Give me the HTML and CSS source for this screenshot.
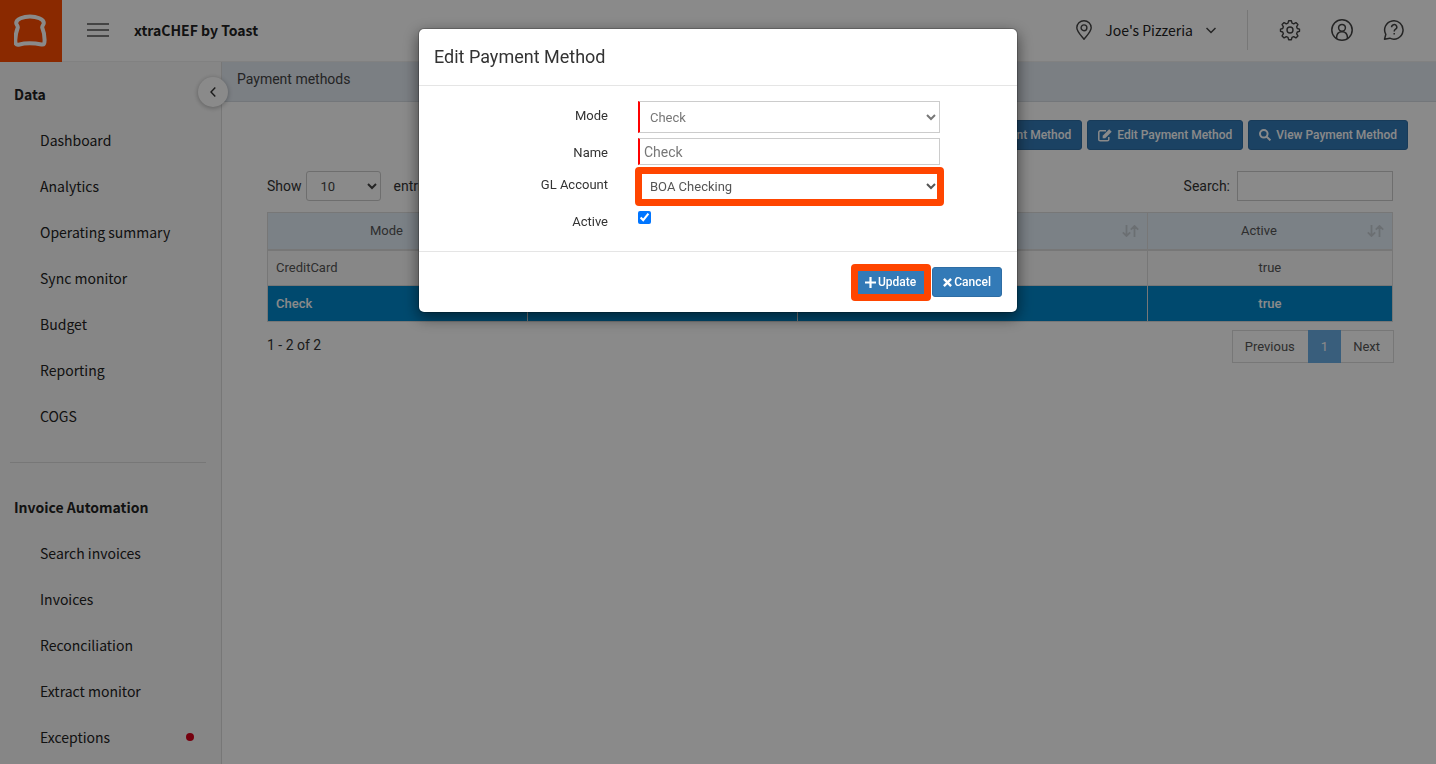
FILE: index.html
```html
<!DOCTYPE html>
<html lang="en">
<head>
    <meta charset="UTF-8">
    <meta name="viewport" content="width=device-width, initial-scale=1.0">
    <title>Payment methods</title>
    <link rel="stylesheet" href="styles.css">
</head>
<body>
    <header class="topbar">
        <a href="#" class="logo" aria-label="Toast">
            <svg width="34" height="34" viewBox="0 0 34 34" fill="none" stroke="#fff" stroke-width="4" stroke-linejoin="round">
                <path d="M16 2.500C9.500 2.500 2.200 5 2.200 9C2.200 11 4 11.300 3.800 13.500C2.500 17 1.300 21 1.300 26C1.300 30 2 31 4.500 30.700C8 29.800 12 29.300 15.800 29.300C20 29.300 24 29.800 27.500 30.500C30 31 30.600 30 30.600 26C30.600 21 29.600 17 28.200 13.500C28 11.300 29.800 11 29.800 9C29.800 5 22.500 2.500 16 2.500Z"/>
            </svg>
        </a>
        <button class="icon-btn menu-btn" aria-label="Menu">
            <svg width="22" height="14" viewBox="0 0 22 14" stroke="#555" stroke-width="1.500"><path d="M0 1h22M0 7h22M0 13h22"/></svg>
        </button>
        <span class="brand">xtraCHEF by Toast</span>
        <button class="icon-btn location">
            <svg width="16" height="20" viewBox="0 0 16 20" fill="none" stroke="#444" stroke-width="1.400"><path d="M8 19.200C5 15.500 .8 11.500 .8 7.800a7.200 7 0 0 1 14.400 0C15.200 11.500 11 15.500 8 19.200Z"/><circle cx="8" cy="7.800" r="2.900"/></svg>
            <span>Joe's Pizzeria</span>
            <svg width="10" height="7" viewBox="0 0 10 7" fill="none" stroke="#444" stroke-width="1.500"><path d="M.5 1L5 5.500L9.500 1"/></svg>
        </button>
        <div class="top-icons">
            <button class="icon-btn" aria-label="Settings">
                <svg width="22" height="22" viewBox="0 0 22 22" fill="none" stroke="#444" stroke-width="1.400" stroke-linejoin="round"><circle cx="11" cy="11" r="3"/><path d="M9.600 1.800h2.800l.6 2.400 1.700.7 2.200-1.300 2 2-1.300 2.200.7 1.700 2.200.6v2.200l-2.200.7-.7 1.700 1.300 2.200-2 2-2.200-1.300-1.700.7-.6 2.400H9.600L9 18.300l-1.700-.7-2.200 1.300-2-2 1.300-2.200-.7-1.700-2.200-.7v-2.200l2.200-.6.7-1.700-1.300-2.200 2-2 2.200 1.300L9 4.200Z"/></svg>
            </button>
            <button class="icon-btn" aria-label="Account">
                <svg width="22" height="22" viewBox="0 0 22 22" fill="none" stroke="#444" stroke-width="1.500"><circle cx="11" cy="11" r="10.200"/><circle cx="11" cy="8.800" r="3.400"/><path d="M5.500 19.300C5.500 15 7.500 12.800 11 12.800S16.500 15 16.500 19.300"/></svg>
            </button>
            <button class="icon-btn" aria-label="Help">
                <svg width="22" height="22" viewBox="0 0 22 22" fill="none" stroke="#444" stroke-width="1.500" stroke-linejoin="round"><path d="M1.500 20.200L2.800 15.400A9.200 9.200 0 1 1 6.800 19.200Z"/><path d="M8.600 8.300A2.600 2.500 0 1 1 12.600 10.200C11.500 10.900 11.200 11.400 11.200 12.500"/><path d="M11.200 13.900v1.500"/></svg>
            </button>
        </div>
    </header>

    <div class="layout">
        <aside class="sidebar">
            <button class="collapse" aria-label="Collapse">
                <svg width="6" height="10" viewBox="0 0 6 10" fill="none" stroke="#333" stroke-width="1.400"><path d="M5.300 .5L1 5l4.300 4.500"/></svg>
            </button>
            <nav>
                <h2>Data</h2>
                <a href="#">Dashboard</a>
                <a href="#">Analytics</a>
                <a href="#">Operating summary</a>
                <a href="#">Sync monitor</a>
                <a href="#">Budget</a>
                <a href="#">Reporting</a>
                <a href="#">COGS</a>
                <hr>
                <h2>Invoice Automation</h2>
                <a href="#">Search invoices</a>
                <a href="#">Invoices</a>
                <a href="#">Reconciliation</a>
                <a href="#">Extract monitor</a>
                <a href="#">Exceptions <span class="dot"></span></a>
            </nav>
        </aside>

        <main class="content">
            <div class="page-title">Payment methods</div>
            <div class="actions">
                <button class="btn"><svg width="12" height="12" viewBox="0 0 12 12" stroke="#fff" stroke-width="2.500"><path d="M6 0v12M0 6h12"/></svg>Add Payment Method</button>
                <button class="btn"><svg width="14" height="13" viewBox="0 0 14 13" fill="none" stroke="#fff" stroke-width="1.500"><path d="M8 1.800H2.200a1.400 1.400 0 0 0-1.400 1.400v7.200a1.400 1.400 0 0 0 1.400 1.400h7.200a1.400 1.400 0 0 0 1.400-1.400V8"/><path d="M4.700 9.300V6.800L11.200 .3l2.500 2.500-6.500 6.500Z" fill="#fff" stroke="none"/></svg>Edit Payment Method</button>
                <button class="btn"><svg width="12" height="12" viewBox="0 0 12 12" fill="none" stroke="#fff" stroke-width="2"><circle cx="4.800" cy="4.800" r="3.800"/><path d="M7.600 7.600L11.400 11.400"/></svg>View Payment Method</button>
            </div>

            <div class="grid">
                <div class="grid-top">
                    <label>Show
                        <select class="length">
                            <option>10</option>
                            <option>25</option>
                        </select>
                        <span class="entries">entries</span>
                    </label>
                    <label>Search: <input type="search" class="search"></label>
                </div>
                <table>
                    <colgroup><col class="c1"><col class="c2"><col class="c3"><col class="c4"></colgroup>
                    <thead>
                        <tr>
                            <th>Mode</th>
                            <th>Name</th>
                            <th>GL Account
                                <svg class="sort" width="17" height="12" viewBox="0 0 17 12" fill="none" stroke="#c6cdd3" stroke-width="1.800"><path d="M4.500 0v11M.8 7.300l3.700 3.700 3.700-3.700M12.500 12V1M8.800 4.700L12.500 1l3.700 3.700"/></svg>
                            </th>
                            <th>Active
                                <svg class="sort" width="17" height="12" viewBox="0 0 17 12" fill="none" stroke="#c6cdd3" stroke-width="1.800"><path d="M4.500 0v11M.8 7.300l3.700 3.700 3.700-3.700M12.500 12V1M8.800 4.700L12.500 1l3.700 3.700"/></svg>
                            </th>
                        </tr>
                    </thead>
                    <tbody>
                        <tr>
                            <td>CreditCard</td>
                            <td></td>
                            <td></td>
                            <td class="center">true</td>
                        </tr>
                        <tr class="selected">
                            <td>Check</td>
                            <td></td>
                            <td></td>
                            <td class="center">true</td>
                        </tr>
                    </tbody>
                </table>
                <div class="grid-bottom">
                    <span>1 - 2 of 2</span>
                    <div class="pager">
                        <a href="#">Previous</a>
                        <a href="#" class="current">1</a>
                        <a href="#">Next</a>
                    </div>
                </div>
            </div>
        </main>
    </div>

    <div class="backdrop">
        <form class="modal" role="dialog" aria-labelledby="modal-title">
            <h4 class="modal-header" id="modal-title">Edit Payment Method</h4>
            <div class="modal-body">
                <div class="row">
                    <label for="mode">Mode</label>
                    <select id="mode" class="field required" disabled>
                        <option>Check</option>
                    </select>
                </div>
                <div class="row">
                    <label for="name">Name</label>
                    <input type="text" id="name" class="field required" value="Check">
                </div>
                <div class="row">
                    <label for="gl">GL Account</label>
                    <div class="highlight">
                        <select id="gl" class="field">
                            <option>BOA Checking</option>
                        </select>
                    </div>
                </div>
                <div class="row">
                    <label for="active">Active</label>
                    <input type="checkbox" id="active" checked>
                </div>
            </div>
            <div class="modal-footer">
                <div class="highlight">
                    <button type="button" class="btn small"><svg width="11" height="11" viewBox="0 0 11 11" stroke="#fff" stroke-width="2.200"><path d="M5.500 0v11M0 5.500h11"/></svg>Update</button>
                </div>
                <button type="button" class="btn small"><svg width="9" height="9" viewBox="0 0 9 9" stroke="#fff" stroke-width="2.400"><path d="M.9 .9l7.200 7.200M8.100 .9L.9 8.100"/></svg>Cancel</button>
            </div>
        </form>
    </div>
</body>
</html>
```
FILE: styles.css
```css
* {
    box-sizing: border-box;
}
body {
    margin: 0;
    height: 100vh;
    overflow: hidden;
    display: flex;
    flex-direction: column;
    font-family: Roboto, sans-serif;
    font-size: 14px;
    line-height: 20px;
    color: #333;
    background-color: #fff;
}
button, input, select {
    font: inherit;
    color: inherit;
}
a {
    color: inherit;
    text-decoration: none;
}

/* top bar */
.topbar {
    display: flex;
    align-items: center;
    flex: none;
    height: 62px;
    padding: 0 31px 1px 0;
    border-bottom: 1px solid #eee;
    font-family: "Noto Sans CJK SC", sans-serif;
    color: #222;
}
.logo {
    display: flex;
    align-items: center;
    align-self: flex-start;
    justify-content: center;
    width: 62px;
    height: 62px;
    background-color: #ff4c00;
}
.icon-btn {
    display: flex;
    align-items: center;
    padding: 0;
    border: 0;
    background: none;
}
.menu-btn {
    margin: 0 25px;
}
.brand {
    font-weight: bold;
}
.location {
    gap: 13px;
    margin-left: auto;
    padding-right: 31px;
}
.top-icons {
    display: flex;
    align-items: center;
    gap: 30px;
    height: 40px;
    padding-left: 31px;
    border-left: 1px solid #ddd;
}

/* sidebar */
.layout {
    display: flex;
    flex: 1;
    min-height: 0;
}
.sidebar {
    position: relative;
    flex: none;
    width: 222px;
    padding: 10px 15px 0 10px;
    background-color: #f8f8f8;
    border-right: 1px solid #ddd;
    font-family: "Noto Sans CJK SC", sans-serif;
    color: #222;
}
.sidebar h2, .sidebar a {
    display: flex;
    align-items: center;
    height: 46px;
    margin: 0;
    padding-bottom: 2px;
    font-size: 14px;
}
.sidebar h2 {
    padding-left: 4px;
}
.sidebar a {
    justify-content: space-between;
    padding-left: 30px;
    padding-right: 12px;
}
.sidebar hr {
    margin: 22px 0;
    border: 0;
    border-top: 1px solid #ddd;
}
.dot {
    width: 8px;
    height: 8px;
    border-radius: 50%;
    background-color: #d9001b;
}
.collapse {
    position: absolute;
    top: 15px;
    right: -7px;
    display: flex;
    align-items: center;
    justify-content: center;
    width: 30px;
    height: 30px;
    padding: 0;
    border: 0;
    border-radius: 50%;
    background-color: #fff;
    box-shadow: 0 1px 5px rgba(0, 0, 0, 0.3);
}

/* content */
.content {
    flex: 1;
}
.page-title {
    height: 40px;
    padding: 7px 15px;
    background-color: #e3eaf2;
    border-bottom: 1px solid #d5dbe2;
    color: #444;
}
.actions {
    display: flex;
    justify-content: flex-end;
    gap: 5px;
    padding: 18px 28px 0 0;
}
.btn {
    display: flex;
    align-items: center;
    gap: 5px;
    height: 30px;
    padding: 0 10px;
    border: 1px solid #2e6da4;
    border-radius: 3px;
    background-color: #337ab7;
    color: #fff;
    font-size: 12px;
    font-weight: 500;
}
.grid {
    padding: 21px 43px 0 45px;
}
.grid-top, .grid-bottom {
    display: flex;
    justify-content: space-between;
    align-items: center;
}
.grid-top label {
    display: flex;
    align-items: center;
    gap: 4px;
}
.length {
    width: 75px;
    height: 30px;
    padding: 0 10px;
    border: 1px solid #ccc;
    border-radius: 3px;
    background-color: #fff;
    color: #444;
    font-size: 13px;
}
.entries {
    padding-left: 9px;
}
.search {
    width: 156px;
    height: 30px;
    margin-left: 3px;
    border: 1px solid #ccc;
    background-color: #fff;
}
table {
    width: 100%;
    margin-top: 11px;
    border-collapse: collapse;
    table-layout: fixed;
    color: #555;
    font-size: 13px;
}
.c1 { width: 23.1%; }
.c2 { width: 24%; }
.c3 { width: 31.1%; }
.c4 { width: 21.8%; }
th, td {
    height: 36px;
    padding: 0 8px;
    border: 1px solid #ddd;
    text-align: left;
}
th {
    position: relative;
    height: 37px;
    padding-right: 30px;
    border-bottom-width: 2px;
    background-color: #e3eef8;
    font-weight: normal;
    text-align: center;
}
.sort {
    position: absolute;
    top: 12px;
    right: 8px;
}
tbody tr {
    background-color: #f9f9f9;
}
.center {
    text-align: center;
}
.selected {
    background-color: #0088cc;
    color: #fff;
    font-weight: 500;
}
.grid-bottom {
    margin-top: 8px;
    margin-right: -1px;
    align-items: flex-start;
}
.grid-bottom > span {
    padding-top: 5px;
}
.pager {
    display: flex;
    border: 1px solid #ddd;
    color: #555;
    font-size: 13px;
}
.pager a {
    height: 31px;
    padding: 6px 13px 5px 12px;
}
.pager .current {
    margin: -1px 0;
    height: 33px;
    padding: 7px 13px 6px;
    background-color: #6aaee6;
    color: #fff;
}

/* modal */
.backdrop {
    position: fixed;
    inset: 0;
    background-color: rgba(0, 0, 0, 0.46);
}
.modal {
    max-width: 600px;
    margin: 28px auto;
    border: 1px solid rgba(0, 0, 0, 0.2);
    border-radius: 6px;
    background-color: #fff;
    background-clip: padding-box;
    box-shadow: 0 5px 15px rgba(0, 0, 0, 0.5);
}
.modal-header {
    margin: 0;
    padding: 18px 15px;
    border-bottom: 1px solid #e5e5e5;
    font-size: 18px;
    font-weight: normal;
}
.modal-body {
    display: flex;
    flex-direction: column;
    gap: 5px;
    padding: 15px;
}
.row {
    display: flex;
    align-items: flex-start;
    gap: 30px;
}
.row:last-child {
    min-height: 29px;
}
.row label {
    width: 174px;
    padding-top: 5px;
    font-size: 13px;
    text-align: right;
}
.field {
    display: block;
    width: 302px;
    height: 32px;
    padding: 0 7px;
    border: 1px solid #ccc;
    border-radius: 0;
    background-color: #fff;
    color: #555;
    font-size: 13px;
}
.required {
    padding: 0 6px;
    border-left: 2px solid #f00;
    color: #777;
    opacity: 1;
}
input.field {
    height: 27px;
    padding: 0 4px;
    font-size: 14px;
}
.row input[type="checkbox"] {
    width: 13px;
    height: 13px;
    margin: 4px 0;
}
.modal-footer {
    display: flex;
    justify-content: flex-end;
    gap: 5px;
    padding: 15px;
    border-top: 1px solid #e5e5e5;
}
.small {
    gap: 2px;
}
.highlight {
    position: relative;
}
.highlight::after {
    content: "";
    position: absolute;
    inset: -3px -4px -4px -3px;
    border: 7px solid #ff4500;
    border-radius: 4px;
    pointer-events: none;
}
```
